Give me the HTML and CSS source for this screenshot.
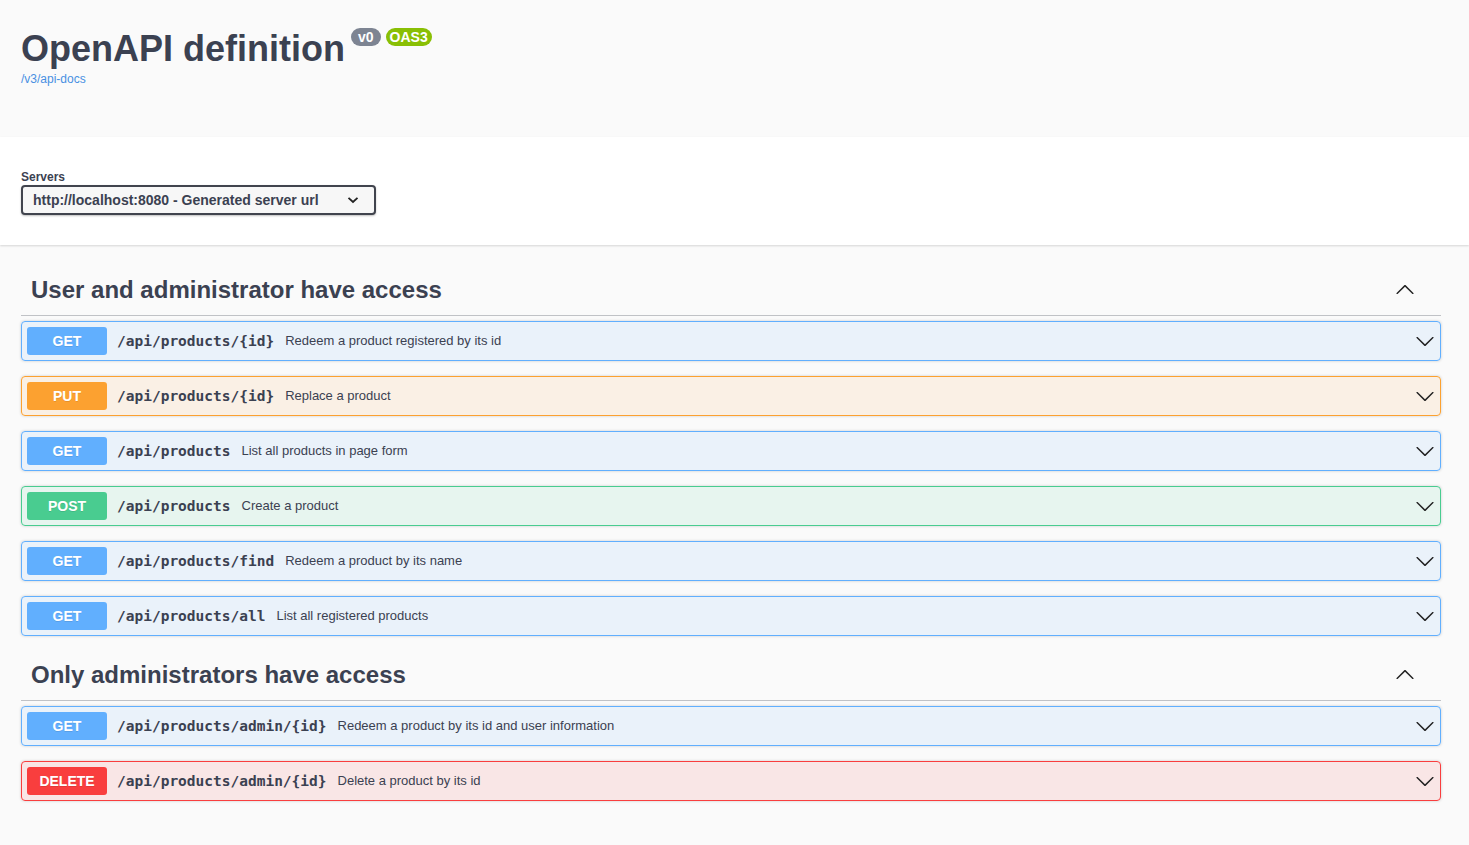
FILE: index.html
```html
<!DOCTYPE html>
<html lang="en">
<head>
<meta charset="utf-8">
<title>Swagger UI</title>
<link rel="stylesheet" href="styles.css">
</head>
<body>
<div class="info">
  <div class="wrapper">
    <div class="title-row">
      <h2 class="title">OpenAPI definition</h2>
      <span class="badge badge-version">v0</span>
      <span class="badge badge-oas">OAS3</span>
    </div>
    <a class="url" href="#">/v3/api-docs</a>
  </div>
</div>

<div class="scheme">
  <div class="wrapper">
    <div class="servers-title">Servers</div>
    <div class="select">
      <span>http://localhost:8080 - Generated server url</span>
      <svg class="select-arrow" width="12" height="8" viewBox="0 0 12 8"><path d="M1.5 1.8 L6 6 L10.5 1.8" fill="none" stroke="#222" stroke-width="1.8"/></svg>
    </div>
  </div>
</div>

<div class="wrapper">
  <section class="tag-section">
    <h3 class="tag">
      <span>User and administrator have access</span>
      <svg class="tag-arrow" width="20" height="20" viewBox="0 0 20 20"><path d="M17.418 14.908c.272.268.709.268.979 0s.271-.701 0-.969l-7.908-7.83c-.27-.268-.707-.268-.979 0l-7.908 7.83c-.27.268-.27.701 0 .969.271.268.709.268.979 0L10 7.767l7.418 7.141z" fill="#222"/></svg>
    </h3>
    <div class="op op-get"><span class="method">GET</span><span class="path">/api/products/{id}</span><span class="desc">Redeem a product registered by its id</span><svg class="op-arrow" width="20" height="20" viewBox="0 0 20 20"><path d="M17.418 6.109c.272-.268.709-.268.979 0s.271.701 0 .969l-7.908 7.83c-.27.268-.707.268-.979 0l-7.908-7.83c-.27-.268-.27-.701 0-.969.271-.268.709-.268.979 0L10 13.25l7.418-7.141z" fill="#222"/></svg></div>
    <div class="op op-put"><span class="method">PUT</span><span class="path">/api/products/{id}</span><span class="desc">Replace a product</span><svg class="op-arrow" width="20" height="20" viewBox="0 0 20 20"><path d="M17.418 6.109c.272-.268.709-.268.979 0s.271.701 0 .969l-7.908 7.83c-.27.268-.707.268-.979 0l-7.908-7.83c-.27-.268-.27-.701 0-.969.271-.268.709-.268.979 0L10 13.25l7.418-7.141z" fill="#222"/></svg></div>
    <div class="op op-get"><span class="method">GET</span><span class="path">/api/products</span><span class="desc">List all products in page form</span><svg class="op-arrow" width="20" height="20" viewBox="0 0 20 20"><path d="M17.418 6.109c.272-.268.709-.268.979 0s.271.701 0 .969l-7.908 7.83c-.27.268-.707.268-.979 0l-7.908-7.83c-.27-.268-.27-.701 0-.969.271-.268.709-.268.979 0L10 13.25l7.418-7.141z" fill="#222"/></svg></div>
    <div class="op op-post"><span class="method">POST</span><span class="path">/api/products</span><span class="desc">Create a product</span><svg class="op-arrow" width="20" height="20" viewBox="0 0 20 20"><path d="M17.418 6.109c.272-.268.709-.268.979 0s.271.701 0 .969l-7.908 7.83c-.27.268-.707.268-.979 0l-7.908-7.83c-.27-.268-.27-.701 0-.969.271-.268.709-.268.979 0L10 13.25l7.418-7.141z" fill="#222"/></svg></div>
    <div class="op op-get"><span class="method">GET</span><span class="path">/api/products/find</span><span class="desc">Redeem a product by its name</span><svg class="op-arrow" width="20" height="20" viewBox="0 0 20 20"><path d="M17.418 6.109c.272-.268.709-.268.979 0s.271.701 0 .969l-7.908 7.83c-.27.268-.707.268-.979 0l-7.908-7.83c-.27-.268-.27-.701 0-.969.271-.268.709-.268.979 0L10 13.25l7.418-7.141z" fill="#222"/></svg></div>
    <div class="op op-get"><span class="method">GET</span><span class="path">/api/products/all</span><span class="desc">List all registered products</span><svg class="op-arrow" width="20" height="20" viewBox="0 0 20 20"><path d="M17.418 6.109c.272-.268.709-.268.979 0s.271.701 0 .969l-7.908 7.83c-.27.268-.707.268-.979 0l-7.908-7.83c-.27-.268-.27-.701 0-.969.271-.268.709-.268.979 0L10 13.25l7.418-7.141z" fill="#222"/></svg></div>
  </section>

  <section class="tag-section">
    <h3 class="tag">
      <span>Only administrators have access</span>
      <svg class="tag-arrow" width="20" height="20" viewBox="0 0 20 20"><path d="M17.418 14.908c.272.268.709.268.979 0s.271-.701 0-.969l-7.908-7.83c-.27-.268-.707-.268-.979 0l-7.908 7.830c-.27.268-.27.701 0 .969.271.268.709.268.979 0L10 7.767l7.418 7.141z" fill="#222"/></svg>
    </h3>
    <div class="op op-get"><span class="method">GET</span><span class="path">/api/products/admin/{id}</span><span class="desc">Redeem a product by its id and user information</span><svg class="op-arrow" width="20" height="20" viewBox="0 0 20 20"><path d="M17.418 6.109c.272-.268.709-.268.979 0s.271.701 0 .969l-7.908 7.83c-.27.268-.707.268-.979 0l-7.908-7.83c-.27-.268-.27-.701 0-.969.271-.268.709-.268.979 0L10 13.25l7.418-7.141z" fill="#222"/></svg></div>
    <div class="op op-delete"><span class="method">DELETE</span><span class="path">/api/products/admin/{id}</span><span class="desc">Delete a product by its id</span><svg class="op-arrow" width="20" height="20" viewBox="0 0 20 20"><path d="M17.418 6.109c.272-.268.709-.268.979 0s.271.701 0 .969l-7.908 7.83c-.27.268-.707.268-.979 0l-7.908-7.83c-.27-.268-.27-.701 0-.969.271-.268.709-.268.979 0L10 13.25l7.418-7.141z" fill="#222"/></svg></div>
  </section>
</div>
</body>
</html>
```

FILE: styles.css
```css
html, body {
  margin: 0;
  padding: 0;
}
body {
  background: #fafafa;
  font-family: "Liberation Sans", Arial, sans-serif;
  color: #3b4151;
}
.wrapper {
  width: 1420px;
  margin: 0 0 0 21px;
}

/* info */
.info {
  padding: 28px 0 0;
  height: 109px;
  box-sizing: content-box;
}
.title-row {
  display: flex;
  align-items: flex-start;
}
.title {
  margin: 0;
  font-size: 36px;
  line-height: 42px;
  font-weight: 700;
  color: #3b4151;
}
.badge {
  display: inline-block;
  height: 18px;
  line-height: 18px;
  border-radius: 57px;
  color: #fff;
  font-size: 14px;
  font-weight: 700;
  box-sizing: border-box;
}
.badge-version {
  margin-left: 6px;
  padding: 0 7px;
  background: #7d8492;
}
.badge-oas {
  margin-left: 5px;
  padding: 0 4px;
  background: #89bf04;
}
.url {
  display: block;
  margin-top: 2px;
  font-size: 12px;
  line-height: 14px;
  color: #4990e2;
  text-decoration: none;
}

/* servers */
.scheme {
  background: #fff;
  box-shadow: 0 1px 2px 0 rgba(0, 0, 0, .15);
  padding: 30px 0;
  margin-bottom: 21px;
}
.servers-title {
  font-size: 12px;
  font-weight: 700;
  line-height: 16px;
  margin-top: 2px;
  color: #3b4151;
}
.select {
  width: 355px;
  height: 30px;
  box-sizing: border-box;
  border: 2px solid #41444e;
  border-radius: 4px;
  background: #f7f7f7;
  box-shadow: 0 1px 2px 0 rgba(0, 0, 0, .25);
  display: flex;
  align-items: center;
  justify-content: space-between;
  padding: 0 15px 0 10px;
  font-size: 14px;
  font-weight: 700;
  color: #3b4151;
}
.select-arrow {
  display: block;
}

/* tags */
.tag-section {
  display: flex;
  flex-direction: column;
}
.tag {
  margin: 0 0 5px;
  padding: 9px 26px 11px 10px;
  height: 29px;
  line-height: 29px;
  font-size: 24px;
  font-weight: 700;
  color: #3b4151;
  border-bottom: 1px solid rgba(59, 65, 81, .3);
  display: flex;
  align-items: center;
  justify-content: space-between;
}
.tag-arrow {
  display: block;
  margin-top: -2px;
}

/* operations */
.op {
  display: flex;
  align-items: center;
  height: 40px;
  box-sizing: border-box;
  padding: 5px;
  margin-bottom: 15px;
  border: 1px solid;
  border-radius: 4px;
  box-shadow: 0 0 3px rgba(0, 0, 0, .19);
}
.method {
  width: 80px;
  height: 28px;
  line-height: 28px;
  text-align: center;
  border-radius: 3px;
  color: #fff;
  font-size: 14px;
  font-weight: 700;
  text-shadow: 0 1px 0 rgba(0, 0, 0, .1);
  flex: none;
}
.path {
  padding: 0 11px 0 10px;
  font-family: "DejaVu Sans Mono", monospace;
  font-size: 14.5px;
  font-weight: 700;
  color: #3b4151;
}
.desc {
  font-size: 13px;
  line-height: 14px;
  margin-top: -1px;
  color: #3b4151;
  flex: 1;
}
.op-arrow {
  display: block;
  flex: none;
}

.op-get {
  background: rgba(97, 175, 254, .1);
  border-color: #61affe;
}
.op-get .method { background: #61affe; }
.op-put {
  background: rgba(252, 161, 48, .1);
  border-color: #fca130;
}
.op-put .method { background: #fca130; }
.op-post {
  background: rgba(73, 204, 144, .1);
  border-color: #49cc90;
}
.op-post .method { background: #49cc90; }
.op-delete {
  background: rgba(249, 62, 62, .1);
  border-color: #f93e3e;
}
.op-delete .method { background: #f93e3e; }
```
